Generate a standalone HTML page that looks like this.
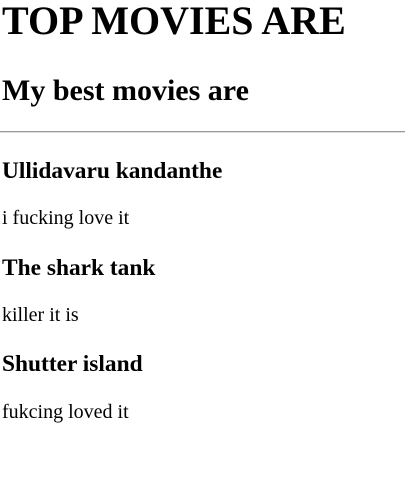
<!DOCTYPE html>
<html><head><style>
body{margin:0;width:405px;height:490px;background:#fff;position:relative;font-family:"Liberation Serif",serif;color:#000;overflow:hidden}
div{position:absolute;left:2px;line-height:1;white-space:nowrap}
.h1{font-size:40px;font-weight:bold;top:1px}
.h2{font-size:30px;font-weight:bold;top:76px}
.h3{font-size:23.4px;font-weight:bold}
.p{font-size:20px}
.hr{left:0;width:405px;top:131px;height:0;border-top:1px solid #9a9a9a;border-bottom:1px solid #e0e0e0}
</style></head><body>
<div class="h1">TOP MOVIES ARE</div>
<div class="h2">My best movies are</div>
<div class="hr"></div>
<div class="h3" style="top:160px">Ullidavaru kandanthe</div>
<div class="p" style="top:208px">i fucking love it</div>
<div class="h3" style="top:257px">The shark tank</div>
<div class="p" style="top:305px">killer it is</div>
<div class="h3" style="top:353px">Shutter island</div>
<div class="p" style="top:402px">fukcing loved it</div>
</body></html>
